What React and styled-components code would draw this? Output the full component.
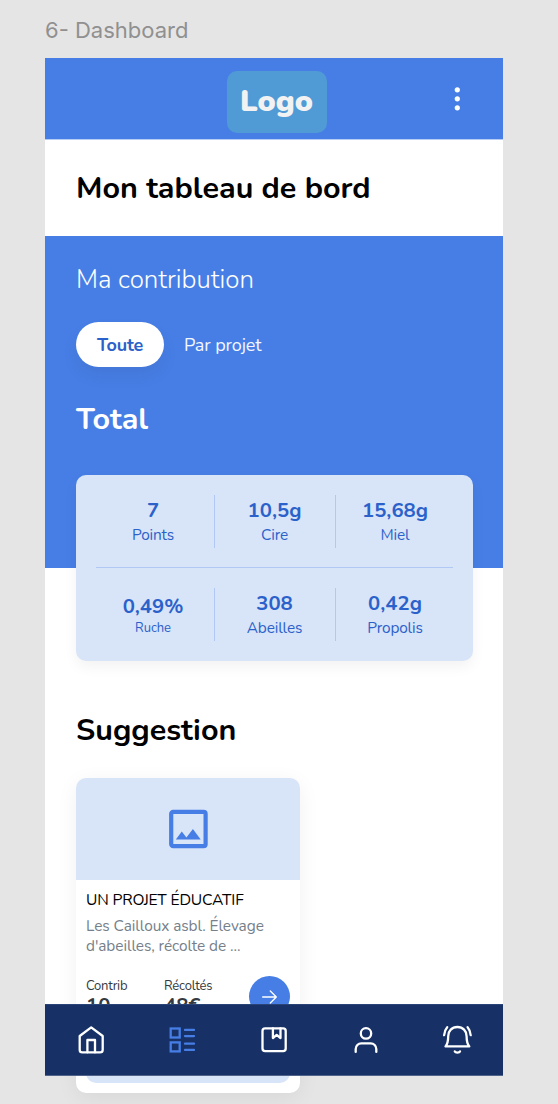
import React from "react";
import styled, { createGlobalStyle } from "styled-components";

const c = {
  canvas: "#e5e5e5",
  blue: "#467ee5",
  pale: "#d8e4f8",
  ink: "#2b61ca",
  rule: "#b1c8f5",
  navy: "#173166",
};

const Global = createGlobalStyle`
  *, *::before, *::after { box-sizing: border-box; }
  body {
    margin: 0;
    background: ${c.canvas};
    font-family: Nunito, Lato, "Open Sans", sans-serif;
    overflow: hidden;
  }
  h1, h2, h3, p { margin: 0; }
`;

const Canvas = styled.div`
  height: 1104px;
  padding-left: 45px;
  overflow: hidden;
`;

const FrameName = styled.div`
  height: 58px;
  padding-top: 16px;
  font: 400 22px/28px Inter, sans-serif;
  color: #909090;
  white-space: nowrap;
`;

const Frame = styled.main`
  position: relative;
  width: 458px;
  height: 1018px;
  background: #fff;
`;

const Header = styled.header`
  display: grid;
  grid-template-columns: 1fr 100px 1fr;
  align-items: center;
  height: 82px;
  padding: 7px 0 0 5px;
  background: ${c.blue};
  border-bottom: 1px solid #b5ccf5;
`;

const Logo = styled.div`
  grid-column: 2;
  height: 62px;
  border-radius: 10px;
  background: #509ad6;
  color: #f2f2f2;
  font-weight: 900;
  font-size: 30.3px;
  line-height: 61px;
  text-align: center;
`;

const MoreButton = styled.button`
  display: flex;
  justify-self: end;
  margin: -7px 42px 0 0;
  padding: 0;
  border: 0;
  background: none;
`;

const Heading = styled.h1`
  height: ${(p) => p.$h}px;
  margin-top: ${(p) => p.$top || 0}px;
  padding-left: 31px;
  font-size: ${(p) => p.$size || 30.5}px;
  font-weight: ${(p) => p.$weight || 700};
  line-height: ${(p) => p.$h}px;
  color: ${(p) => p.$color || "#000"};
  white-space: nowrap;
`;

const Contribution = styled.section`
  height: 332px;
  padding-top: 24px;
  background: ${c.blue};
`;

const Tabs = styled.div`
  display: flex;
  align-items: center;
  gap: 20px;
  margin: 22px 0 32px 31px;
`;

const Tab = styled.button`
  height: 45px;
  width: ${(p) => (p.$active ? "88px" : "auto")};
  padding: 2px 0 0;
  border: 0;
  border-radius: 23px;
  background: ${(p) => (p.$active ? "#fff" : "transparent")};
  box-shadow: ${(p) => (p.$active ? "0 9px 14px rgba(60, 70, 110, 0.1)" : "none")};
  color: ${(p) => (p.$active ? c.ink : "#f3f7ff")};
  font-family: inherit;
  font-size: 18px;
  font-weight: ${(p) => (p.$active ? 700 : 370)};
  line-height: 43px;
  letter-spacing: ${(p) => (p.$active ? -0.2 : -0.1)}px;
`;

const Stats = styled.div`
  width: 397px;
  height: 186px;
  margin: 35px 0 0 31px;
  padding: 20px 20px 0;
  border-radius: 10px;
  background: ${c.pale};
  box-shadow: 0 6px 14px rgba(0, 0, 0, 0.05);
`;

const StatRow = styled.div`
  display: grid;
  grid-template-columns: 119px 121px 117px;
  height: ${(p) => (p.$ruled ? 73 : 72)}px;
  margin-bottom: 20px;
  border-bottom: ${(p) => (p.$ruled ? `1px solid ${c.rule}` : "0")};
`;

const Stat = styled.div`
  display: flex;
  flex-direction: column;
  align-items: center;
  height: 53px;
  padding-top: ${(p) => (p.$small ? 6 : 3)}px;
  padding-right: ${(p) => (p.$first ? "4px" : p.$last ? "0" : "1px")};
  padding-left: ${(p) => (p.$last ? "1px" : "0")};
  border-right: ${(p) => (p.$last ? "0" : `1px solid ${c.rule}`)};
  color: ${c.ink};
`;

const StatValue = styled.strong`
  font-size: 20.3px;
  font-weight: 700;
  line-height: 24px;
`;

const StatLabel = styled.span`
  font-size: ${(p) => (p.$small ? 13 : 15.4)}px;
  font-weight: 380;
  line-height: ${(p) => (p.$small ? 21 : 25)}px;
  letter-spacing: ${(p) => (p.$small ? -0.1 : -0.15)}px;
`;

const Project = styled.article`
  width: 224px;
  height: 315px;
  margin: 28px 0 0 31px;
  border-radius: 10px;
  background: #fff;
  box-shadow: 0 5px 22px rgba(0, 0, 0, 0.06);
  display: flex;
  flex-direction: column;
`;

const Picture = styled.div`
  display: grid;
  place-items: center;
  height: 102px;
  border-radius: 10px 10px 0 0;
  background: ${c.pale};
`;

const ProjectBody = styled.div`
  padding: 9px 10px 0;
`;

const ProjectName = styled.h3`
  font-size: 15.6px;
  font-weight: 400;
  line-height: 22px;
  letter-spacing: -0.15px;
  white-space: nowrap;
`;

const Line = styled.span`
  display: block;
  white-space: nowrap;
`;

const Description = styled.p`
  margin-top: 5px;
  color: #75808a;
  font-size: 15.4px;
  font-weight: 380;
  line-height: 20px;
  letter-spacing: -0.06px;
`;

const Figures = styled.div`
  display: grid;
  grid-template-columns: 78px 85px 41px;
  margin-top: 20px;
`;

const Figure = styled.div`
  color: #343a40;
  padding-top: 2px;
`;

const FigureLabel = styled.div`
  font-size: 13px;
  font-weight: 380;
  line-height: 17px;
  letter-spacing: -0.2px;
`;

const FigureValue = styled.div`
  font-size: 20.3px;
  font-weight: 700;
  line-height: 21px;
`;

const Go = styled.button`
  display: grid;
  place-items: center;
  width: 41px;
  height: 41px;
  padding: 0;
  border: 0;
  border-radius: 50%;
  background: ${c.blue};
`;

const CardFooter = styled.div`
  height: 40px;
  margin: auto 10px 10px;
  border-radius: 10px;
  background: ${c.pale};
`;

const Nav = styled.nav`
  position: absolute;
  inset: auto 0 0 0;
  display: grid;
  grid-template-columns: repeat(5, 1fr);
  place-items: center;
  height: 72px;
  background: ${c.navy};
  border-top: 1px solid #2b4478;
  border-bottom: 1px solid #50648b;
`;

const NavIcon = styled.svg`
  width: 32px;
  height: 32px;
  fill: none;
  stroke: ${(p) => (p.$active ? c.blue : "#fff")};
  stroke-width: 2.3;
  stroke-linecap: round;
  stroke-linejoin: round;
`;

const stats = [
  [
    { value: "7", label: "Points" },
    { value: "10,5g", label: "Cire" },
    { value: "15,68g", label: "Miel" },
  ],
  [
    { value: "0,49%", label: "Ruche", small: true },
    { value: "308", label: "Abeilles" },
    { value: "0,42g", label: "Propolis" },
  ],
];

export default function App() {
  return (
    <Canvas>
      <Global />
      <FrameName>6- Dashboard</FrameName>
      <Frame>
        <Header>
          <Logo>Logo</Logo>
          <MoreButton aria-label="Menu">
            <svg width="8" height="26" viewBox="0 0 8 26" fill="#fff">
              <circle cx="4.3" cy="3.8" r="2.6" />
              <circle cx="4.3" cy="12.8" r="2.6" />
              <circle cx="4.3" cy="21.8" r="2.6" />
            </svg>
          </MoreButton>
        </Header>
        <Heading $h={96}>Mon tableau de bord</Heading>

        <Contribution>
          <Heading as="h2" $h={40} $size={25.9} $weight={350} $color="#fff">
            Ma contribution
          </Heading>
          <Tabs>
            <Tab $active>Toute</Tab>
            <Tab>Par projet</Tab>
          </Tabs>
          <Heading as="h2" $h={41} $color="#fff">
            Total
          </Heading>
          <Stats>
            {stats.map((row, r) => (
              <StatRow key={r} $ruled={r === 0}>
                {row.map((s, i) => (
                  <Stat key={s.label} $small={s.small} $first={i === 0} $last={i === 2}>
                    <StatValue>{s.value}</StatValue>
                    <StatLabel $small={s.small}>{s.label}</StatLabel>
                  </Stat>
                ))}
              </StatRow>
            ))}
          </Stats>
        </Contribution>

        <Heading as="h2" $h={40} $top={142}>
          Suggestion
        </Heading>
        <Project>
          <Picture>
            <svg width="40" height="40" viewBox="0 0 40 40">
              <rect x="3.2" y="2.8" width="34.4" height="34.4" rx="2" fill="none" stroke={c.blue} strokeWidth="4.2" />
              <path d="M7.8 30.6 13.8 22.4l4.6 6 6.5-8.3 7.8 10.5Z" fill={c.blue} />
            </svg>
          </Picture>
          <ProjectBody>
            <ProjectName>UN PROJET ÉDUCATIF</ProjectName>
            <Description>
              <Line>Les Cailloux asbl. Élevage</Line>
              <Line>d'abeilles, récolte de ...</Line>
            </Description>
            <Figures>
              <Figure>
                <FigureLabel>Contrib</FigureLabel>
                <FigureValue>10</FigureValue>
              </Figure>
              <Figure>
                <FigureLabel>Récoltés</FigureLabel>
                <FigureValue>48€</FigureValue>
              </Figure>
              <Go aria-label="Voir">
                <svg width="16" height="14" viewBox="0 0 16 14" fill="none" stroke="#fff" strokeWidth="1.3" strokeLinecap="round" strokeLinejoin="round">
                  <path d="M.6 7h13.500M8.300 1l6 6-6 6" />
                </svg>
              </Go>
            </Figures>
          </ProjectBody>
          <CardFooter />
        </Project>

        <Nav>
          <NavIcon viewBox="0 0 32 32">
            <path d="M16.2 3.4 4.7 12v13.7a2.7 2.7 0 0 0 2.7 2.7h17.6a2.7 2.7 0 0 0 2.7-2.7V12Z" />
            <path d="M12.4 28.3V16h7.6v12.3" />
          </NavIcon>
          <NavIcon viewBox="0 0 32 32" $active>
            <g strokeLinejoin="miter">
              <rect x="4.7" y="4.5" width="9" height="9" />
              <rect x="4.7" y="18.4" width="9" height="9" />
            </g>
            <path d="M19 5.9h9M19 12.1h9M19 19.7h9M19 25.9h9" />
          </NavIcon>
          <NavIcon viewBox="0 0 32 32">
            <rect x="4.5" y="4.3" width="23.2" height="22.9" rx="2.6" />
            <path d="M14.9 4.5v9.6l3.8-3.2 3.8 3.2V4.5" />
          </NavIcon>
          <NavIcon viewBox="0 0 32 32">
            <circle cx="16" cy="9.4" r="5.2" />
            <path d="M5.7 27.9v-3a5.6 5.6 0 0 1 5.6-5.6h9.4a5.6 5.6 0 0 1 5.600 5.600v3" />
          </NavIcon>
          <NavIcon viewBox="0 0 32 32">
            <path d="M4.5 22.4h23.8c-2.2-2.6-2.7-5-2.700-10.200 0-5.400-3.700-9.200-9.200-9.200s-9.200 3.800-9.200 9.200c0 5.200-.5 7.600-2.700 10.200Z" />
            <path d="M13.800 27.400c.7 1.500 4.500 1.500 5.200 0" />
            <path d="M6.200 3.200C4.200 5.500 3.300 8 3.100 11.200M26.600 3.200c2 2.300 2.900 4.800 3.100 8" />
          </NavIcon>
        </Nav>
      </Frame>
    </Canvas>
  );
}
